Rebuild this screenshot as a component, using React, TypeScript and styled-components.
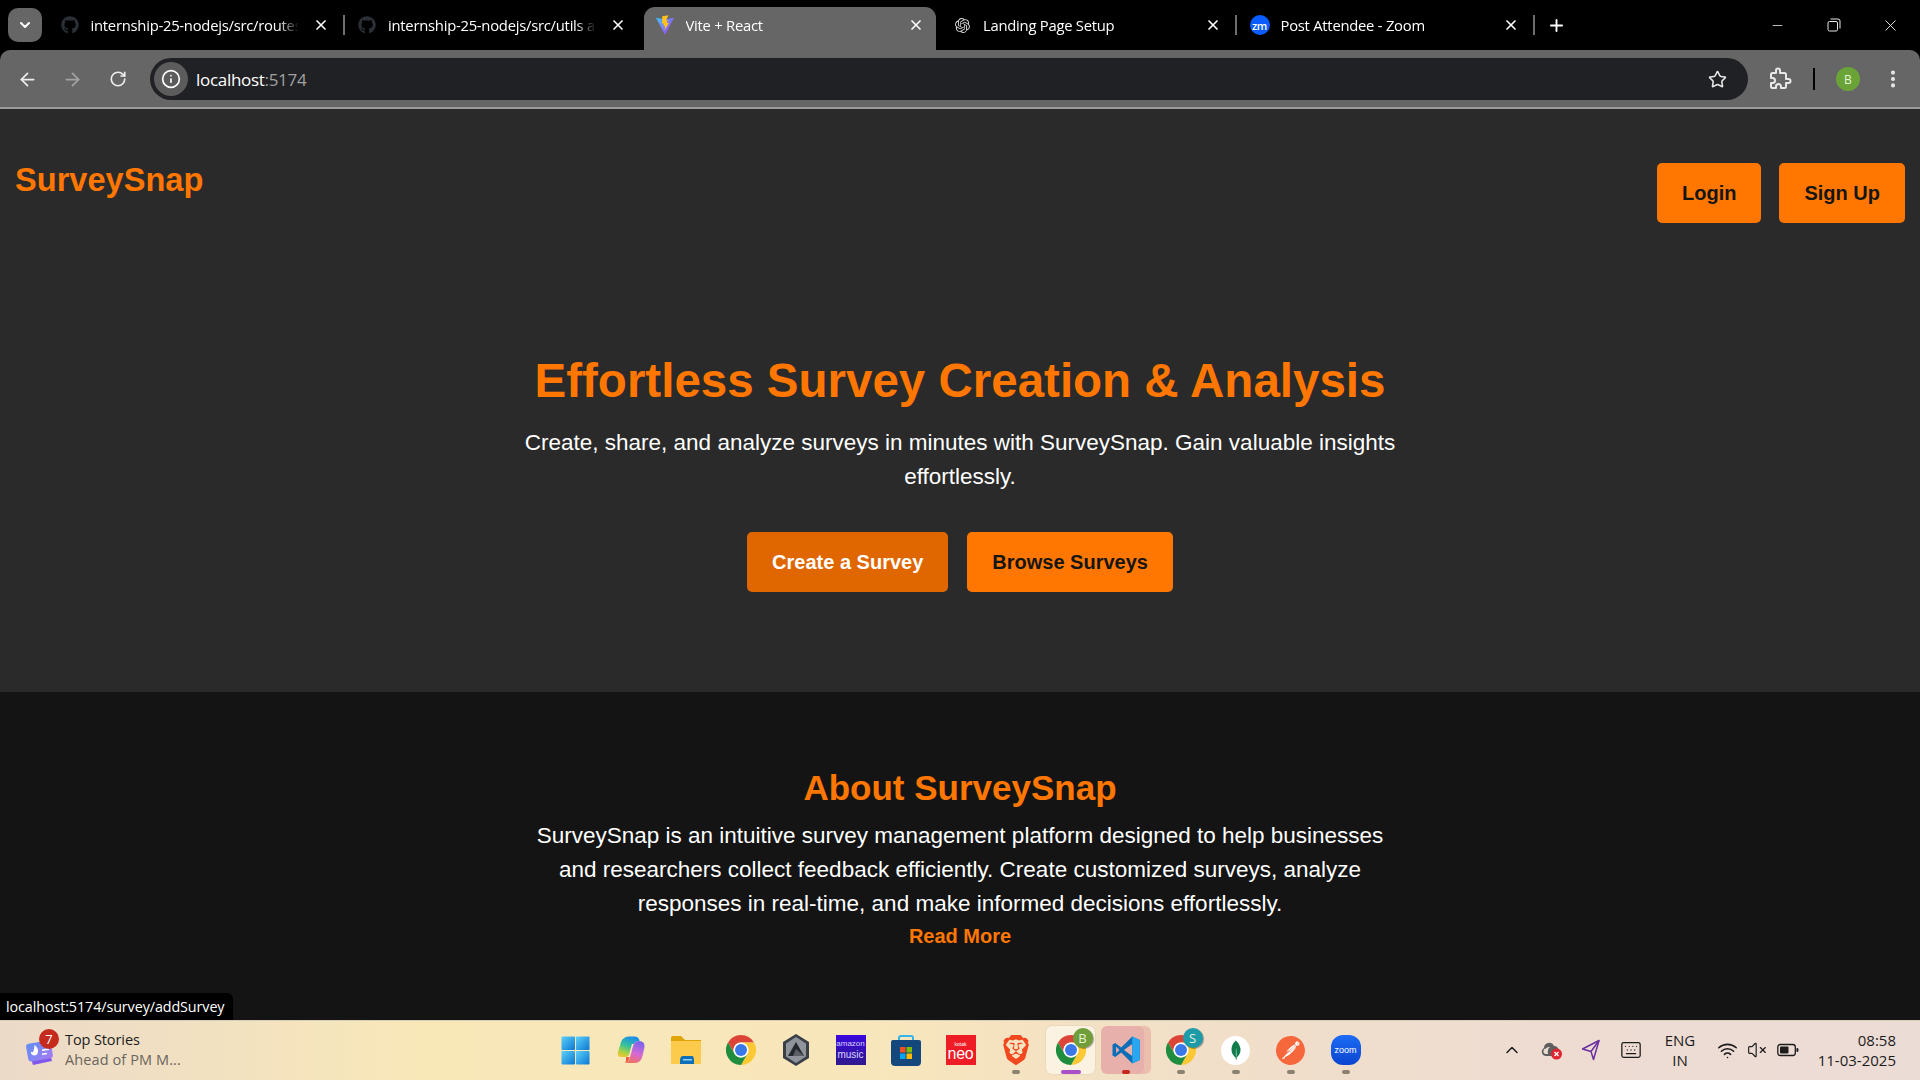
import React from "react";
import styled, { createGlobalStyle } from "styled-components";
import {
  ArrowLeft,
  ArrowRight,
  ChevronDown,
  ChevronUp,
  EllipsisVertical,
  Info,
  Keyboard,
  Minus,
  Plus,
  RotateCw,
  Star,
  VolumeX,
  Wifi,
  X,
} from "lucide-react";
import { FaGithub } from "react-icons/fa";
import { SiBrave, SiMongodb, SiOpenai, SiPostman } from "react-icons/si";

const ORANGE = "#ff7700";
const UI_FONT = `"Open Sans", "Noto Sans", sans-serif`;

const GlobalStyle = createGlobalStyle`
  html, body {
    margin: 0;
    padding: 0;
    background: #000;
    overflow: hidden;
  }
  * {
    box-sizing: border-box;
  }
`;

const Screen = styled.div`
  position: relative;
  display: flex;
  flex-direction: column;
  width: 1920px;
  height: 1080px;
  overflow: hidden;
  font-family: "Liberation Sans", Arial, sans-serif;
`;

/* browser chrome */

const TabStrip = styled.div`
  display: flex;
  align-items: center;
  height: 50px;
  flex-shrink: 0;
  padding-left: 8px;
  background: #000;
  color: #fff;
  font-family: ${UI_FONT};
`;

const TabSearch = styled.div`
  display: flex;
  align-items: center;
  justify-content: center;
  width: 34px;
  height: 34px;
  margin-right: 6px;
  border-radius: 10px;
  background: #666;
`;

const Tab = styled.div<{ $active?: boolean; $divider?: boolean }>`
  position: relative;
  display: flex;
  align-items: center;
  width: 297.5px;
  height: 50px;
  padding: 0 17px 0 12.5px;
  flex-shrink: 0;

  & > * {
    position: relative;
  }

  &::before {
    content: "";
    position: absolute;
    display: ${({ $active }) => ($active ? "block" : "none")};
    left: 1px;
    right: 5px;
    top: 7px;
    bottom: 0;
    background: #666;
    border-radius: 11px 11px 0 0;
  }

  &::after {
    content: "";
    position: absolute;
    display: ${({ $divider }) => ($divider ? "block" : "none")};
    right: 1px;
    top: 15px;
    height: 20px;
    width: 2px;
    background: #6e6e6e;
  }
`;

const Favicon = styled.div`
  display: flex;
  align-items: center;
  justify-content: center;
  width: 18px;
  height: 20px;
  margin-right: 12px;
  flex-shrink: 0;
`;

const ZoomFavicon = styled.div`
  display: flex;
  align-items: center;
  justify-content: center;
  flex-shrink: 0;
  width: 20px;
  height: 20px;
  border-radius: 50%;
  background: #0b5cff;
  color: #fff;
  font-size: 11px;
  font-weight: 600;
  letter-spacing: -0.5px;
`;

const TabTitle = styled.div`
  flex: 1;
  margin-right: 14px;
  overflow: hidden;
  white-space: nowrap;
  font-size: 14.8px;
  letter-spacing: -0.25px;
  mask-image: linear-gradient(to right, #000 90%, transparent 100%);
`;

const NewTab = styled.div`
  display: flex;
  margin-left: 11px;
`;

const WindowControls = styled.div`
  display: flex;
  margin-left: auto;
  margin-right: 1px;
`;

const WindowButton = styled.div`
  display: flex;
  align-items: center;
  justify-content: center;
  width: 56.5px;
  height: 50px;
`;

const Toolbar = styled.div`
  display: flex;
  align-items: center;
  height: 59px;
  flex-shrink: 0;
  padding: 1px 15px 0 5px;
  background: #666;
  border-bottom: 2px solid #9c9c9c;
  border-radius: 10px 10px 0 0;
  color: #e8e8e8;
  font-family: ${UI_FONT};
`;

const NavButton = styled.div<{ $dim?: boolean }>`
  display: flex;
  align-items: center;
  justify-content: center;
  width: 45px;
  height: 40px;
  color: ${({ $dim }) => ($dim ? "#a2a2a2" : "#ededed")};
`;

const Omnibox = styled.div`
  display: flex;
  align-items: center;
  flex: 1;
  height: 42px;
  margin-left: 10px;
  padding: 0 21px 0 4px;
  border-radius: 21px;
  background: #202124;
`;

const SiteInfo = styled.div`
  display: flex;
  align-items: center;
  justify-content: center;
  width: 34px;
  height: 34px;
  margin-right: 8px;
  border-radius: 50%;
  background: #5c5c5c;
  color: #fff;
`;

const UrlHost = styled.span`
  color: #fff;
  font-size: 17px;
  letter-spacing: -0.3px;
`;

const UrlPort = styled.span`
  color: #a0a0a0;
  font-size: 17px;
  letter-spacing: -0.3px;
`;

const OmniEnd = styled.div`
  display: flex;
  margin-left: auto;
`;

const Extensions = styled.div`
  display: flex;
  margin-left: 20px;
`;

const ToolbarDivider = styled.div`
  width: 2px;
  height: 22px;
  margin-left: 21px;
  background: #000;
`;

const Avatar = styled.div`
  display: flex;
  align-items: center;
  justify-content: center;
  width: 24px;
  height: 24px;
  margin-left: 21px;
  border-radius: 50%;
  background: #6aa338;
  color: #e4f3d4;
  font-size: 12px;
`;

const MenuButton = styled.div`
  display: flex;
  justify-content: center;
  width: 24px;
  margin-left: 21px;
`;

/* page */

const Page = styled.main`
  flex: 1;
  min-height: 0;
  overflow: hidden;
  background: #2a2a2a;
`;

const Navbar = styled.nav`
  display: flex;
  justify-content: space-between;
  align-items: flex-start;
  padding: 54px 15px 0;
`;

const Logo = styled.div`
  margin-top: 1px;
  color: ${ORANGE};
  font-size: 32.6px;
  font-weight: 700;
  line-height: 32px;
`;

const NavActions = styled.div`
  display: flex;
  gap: 18px;
`;

const Button = styled.button<{ $tone?: "dark" | "light" }>`
  height: 60px;
  padding: 0 25px;
  border: none;
  border-radius: 5px;
  background: ${({ $tone }) => ($tone === "dark" ? "#e06600" : ORANGE)};
  color: ${({ $tone }) => ($tone === "dark" ? "#fff" : "#151515")};
  font-family: inherit;
  font-size: 20px;
  font-weight: 700;
`;

const Hero = styled.section`
  display: flex;
  flex-direction: column;
  align-items: center;
  height: 469px;
  padding-top: 130px;
  text-align: center;
  background: #2a2a2a;
`;

const HeroTitle = styled.h1`
  margin: 0 0 17px;
  color: ${ORANGE};
  font-size: 47.5px;
  font-weight: 700;
  line-height: 56px;
`;

const Lead = styled.p`
  width: 880px;
  margin: 0;
  color: #fff;
  font-size: 22.5px;
  line-height: 34px;
`;

const HeroActions = styled.div`
  display: flex;
  gap: 19px;
  margin-top: 38px;
`;

const About = styled.section`
  display: flex;
  flex-direction: column;
  align-items: center;
  height: 328px;
  padding-top: 74px;
  text-align: center;
  background: #141414;
`;

const AboutTitle = styled.h2`
  margin: 0 0 9px;
  color: ${ORANGE};
  font-size: 35px;
  font-weight: 700;
  line-height: 44px;
`;

const ReadMore = styled.a`
  margin-top: 3px;
  color: ${ORANGE};
  font-size: 20px;
  font-weight: 700;
  line-height: 24px;
`;

const StatusBubble = styled.div`
  position: absolute;
  left: 0;
  bottom: 60px;
  height: 27px;
  padding: 0 9px 0 6px;
  background: #000;
  border-radius: 0 6px 0 0;
  color: #fff;
  font-family: ${UI_FONT};
  font-size: 14.35px;
  line-height: 27px;
  letter-spacing: -0.1px;
`;

/* taskbar */

const Taskbar = styled.footer`
  display: grid;
  grid-template-columns: 548px auto 1fr;
  align-items: center;
  height: 60px;
  flex-shrink: 0;
  box-shadow: inset 0 1px 0 #d8cdb8;
  background: linear-gradient(90deg, #ecdac9 0%, #f8e8b8 22%, #f8e6bb 45%, #f1dfc8 62%, #eedcd2 80%, #ecdcd6 100%);
  color: #1c1c1c;
  font-family: ${UI_FONT};
`;

const Widget = styled.div`
  display: flex;
  align-items: center;
  padding-left: 25px;
`;

const WidgetIcon = styled.div`
  position: relative;
  width: 40px;
  height: 42px;
`;

const WidgetBadge = styled.span`
  position: absolute;
  left: 14px;
  top: 0;
  width: 20px;
  height: 20px;
  border-radius: 50%;
  background: #c42b1c;
  color: #fff;
  font-size: 13px;
  line-height: 20px;
  text-align: center;
`;

const WidgetText = styled.div`
  margin-top: -1px;
  font-size: 14.5px;
  line-height: 20px;
  letter-spacing: -0.1px;
`;

const WidgetSub = styled.div`
  color: #6a655c;
  letter-spacing: 0.1px;
`;

const Apps = styled.div`
  display: flex;
`;

const AppSlot = styled.div<{ $state?: "focus" | "alert" }>`
  position: relative;
  display: flex;
  align-items: center;
  justify-content: center;
  width: 55px;
  height: 60px;

  &::before {
    content: "";
    position: absolute;
    display: ${({ $state }) => ($state ? "block" : "none")};
    left: 3px;
    right: ${({ $state }) => ($state === "alert" ? "9px" : "3px")};
    top: 6px;
    bottom: 6px;
    border-radius: 6px;
    background: ${({ $state }) => ($state === "focus" ? "#fbf2e2" : "#e8b0aa")};
    box-shadow: ${({ $state }) => ($state === "alert" ? "7px 0 0 0 #eabfae" : "0 0 2px rgba(0,0,0,.12)")};
  }

  & > * {
    position: relative;
  }
`;

const AppDot = styled.span<{ $color?: string; $wide?: boolean }>`
  && {
    position: absolute;
  }
  bottom: 6px;
  left: 50%;
  width: ${({ $wide }) => ($wide ? "20px" : "8px")};
  height: 4px;
  border-radius: 2px;
  transform: translateX(-50%);
  background: ${({ $color }) => $color || "#8c8070"};
`;

const IconBox = styled.div`
  position: relative;
  display: flex;
  align-items: center;
  justify-content: center;
  width: 30px;
  height: 30px;
`;

const AppBadge = styled.span<{ $bg: string }>`
  position: absolute;
  right: -7px;
  top: -7px;
  width: 20px;
  height: 20px;
  border-radius: 50%;
  background: ${({ $bg }) => $bg};
  color: #e6f1d6;
  font-size: 13px;
  line-height: 20px;
  text-align: center;
  box-shadow: 1px 1px 1px rgba(0, 0, 0, 0.35);
`;

const SquareApp = styled.div<{ $bg: string }>`
  display: flex;
  flex-direction: column;
  align-items: center;
  justify-content: center;
  width: 30px;
  height: 30px;
  background: ${({ $bg }) => $bg};
  color: #fff;
  font-family: "Liberation Sans", sans-serif;
  line-height: 1;
`;

const AmazonLine = styled.span<{ $size: number }>`
  font-size: ${({ $size }) => $size}px;
  color: #d8d2ff;
  margin: 1px 0;
`;

const KotakText = styled.span`
  font-size: 5px;
  line-height: 6px;
`;

const NeoText = styled.span`
  font-size: 16px;
  line-height: 13px;
  letter-spacing: -0.3px;
`;

const RoundApp = styled.div<{ $bg: string }>`
  display: flex;
  align-items: center;
  justify-content: center;
  width: 29px;
  height: 29px;
  border-radius: 50%;
  background: ${({ $bg }) => $bg};
`;

const ZoomApp = styled.div`
  display: flex;
  align-items: center;
  justify-content: center;
  width: 30px;
  height: 30px;
  border-radius: 12px;
  background: linear-gradient(180deg, #1c6cf5, #0b45d0);
  color: #fff;
  font-family: "Liberation Sans", sans-serif;
  font-size: 9px;
`;

const Tray = styled.div`
  display: flex;
  align-items: center;
  justify-content: flex-end;
  padding-right: 24px;
`;

const TrayItem = styled.div<{ $w: number }>`
  display: flex;
  align-items: center;
  justify-content: center;
  width: ${({ $w }) => $w}px;
`;

const Lang = styled.div`
  width: 48px;
  margin: 0 6px 0 4px;
  font-size: 15px;
  line-height: 20px;
  text-align: center;
`;

const Clock = styled.div`
  width: 80px;
  margin-left: 10px;
  font-size: 15px;
  line-height: 20px;
  text-align: right;
  white-space: nowrap;
`;

/* drawn icons */

const ViteIcon = () => (
  <svg width="20" height="22" viewBox="0 0 20 22">
    <defs>
      <linearGradient id="viteBody" x1="0" y1="0" x2="1" y2="0.8">
        <stop offset="0" stopColor="#41c8ff" />
        <stop offset="1" stopColor="#a93cf5" />
      </linearGradient>
    </defs>
    <path d="M0 3 L10 5 L20 3 L10.4 21.4 Q10 22 9.6 21.4 Z" fill="url(#viteBody)" />
    <path d="M14 0.2 L7 1.4 L6.6 9.6 L8.8 9.2 L8.2 12.4 L10.2 12 L9.4 17 L14.6 8.4 L12 8.8 L13 5.4 L11 5.8 Z" fill="#ffc21c" />
  </svg>
);

const RestoreIcon = () => (
  <svg width="14" height="14" viewBox="0 0 14 14" fill="none" stroke="#e8e8e8" strokeWidth="1">
    <rect x="1" y="3.5" width="9.5" height="9.5" rx="1.5" />
    <path d="M3.5 1 H11 Q13 1 13 3 V10.5" />
  </svg>
);

const ExtensionIcon = () => (
  <svg width="24" height="24" viewBox="0 0 24 24" fill="none" stroke="#e8e8e8" strokeWidth="2" strokeLinejoin="round">
    <path d="M20.5 12H18V7.5a1.5 1.5 0 0 0-1.5-1.5H12V3.5a2 2 0 0 0-4 0V6H4.5A1.5 1.5 0 0 0 3 7.5V11h1.5a2.5 2.5 0 0 1 0 5H3v3.5A1.5 1.5 0 0 0 4.5 21H8v-1.5a2.5 2.5 0 0 1 5 0V21h3.5a1.5 1.5 0 0 0 1.5-1.5V16h2.5a2 2 0 0 0 0-4z" />
  </svg>
);

const ChromeIcon = ({ size = 30 }: { size?: number }) => (
  <svg width={size} height={size} viewBox="0 0 48 48">
    <path d="M24 0A24 24 0 0 1 44.8 12H24A12 12 0 0 0 13.6 30L3.2 12A24 24 0 0 1 24 0Z" fill="#db4437" />
    <path d="M44.8 12A24 24 0 0 1 24 48L34.4 30A12 12 0 0 0 24 12Z" fill="#fcc934" />
    <path d="M3.2 12A24 24 0 0 0 24 48L34.4 30A12 12 0 0 1 13.6 30Z" fill="#1e8e3e" />
    <circle cx="24" cy="24" r="12" fill="#fff" />
    <circle cx="24" cy="24" r="9.6" fill="#3b78e7" />
  </svg>
);

const WindowsIcon = () => (
  <svg width="29" height="29" viewBox="0 0 30 30">
    <defs>
      <linearGradient id="winTile" x1="0" y1="0" x2="1" y2="1">
        <stop offset="0" stopColor="#5ed0f7" />
        <stop offset="1" stopColor="#0a78d6" />
      </linearGradient>
    </defs>
    <rect x="0.5" y="0.5" width="14" height="14" rx="1" fill="url(#winTile)" />
    <rect x="15.5" y="0.5" width="14" height="14" rx="1" fill="url(#winTile)" />
    <rect x="0.5" y="15.5" width="14" height="14" rx="1" fill="url(#winTile)" />
    <rect x="15.5" y="15.5" width="14" height="14" rx="1" fill="url(#winTile)" />
  </svg>
);

const CopilotIcon = () => (
  <svg width="28" height="28" viewBox="0 0 28 28">
    <defs>
      <linearGradient id="copLeft" x1="0.6" y1="0" x2="0.2" y2="1">
        <stop offset="0" stopColor="#1b8ee8" />
        <stop offset="0.45" stopColor="#35c29a" />
        <stop offset="0.8" stopColor="#b4d23c" />
        <stop offset="1" stopColor="#f2c535" />
      </linearGradient>
      <linearGradient id="copRight" x1="0.6" y1="0" x2="0.3" y2="1">
        <stop offset="0" stopColor="#7a63ee" />
        <stop offset="0.55" stopColor="#d76ad4" />
        <stop offset="1" stopColor="#f0725c" />
      </linearGradient>
    </defs>
    <path d="M8 1.5 Q9 0.5 12 0.5 H18 Q21 0.5 22 3 L22.5 5 Q18 5 17 8 H15 Q14 11 13 15 L12 19 Q11 21 8 21 H4 Q0 21 1 16 L4 6 Q5 2.5 8 1.5 Z" fill="url(#copLeft)" />
    <path d="M17 8 Q18.5 5 22 5 Q28 5 27.5 11 L25.5 20 Q24 27 18 27 H8 Q11.5 26.5 12.5 23 L15.5 12 Q16 9.5 17 8 Z" fill="url(#copRight)" />
    <path d="M9 21 H12.5 L12 23.5 Q11 26.5 8 27 Q9.5 25 9 21 Z" fill="#ee5a3c" />
  </svg>
);

const FolderIcon = () => (
  <svg width="30" height="28" viewBox="0 0 30 28">
    <path d="M0 2 Q0 0 2 0 H10 L14 4 H30 V14 H0 Z" fill="#e0a408" />
    <path d="M0 5 H30 V27 Q30 28 29 28 H1 Q0 28 0 27 Z" fill="#fdcb4b" />
    <path d="M9 25 Q9 20 12 20 H21 Q23 20 23 25 V28 H9 Z" fill="#0c6fb8" />
    <rect x="12" y="23" width="9" height="1.5" fill="#8fd0f5" />
  </svg>
);

const HexIcon = () => (
  <svg width="30" height="32" viewBox="0 0 30 32">
    <path d="M15 0 L28 8 V24 L15 32 L2 24 V8 Z" fill="#3b3f46" />
    <path d="M15 3 L25 9.5 V22.5 L15 29 L5 22.5 V9.5 Z" fill="#8f949c" />
    <path d="M15 8 L23 22 H7 Z" fill="#26282d" />
    <path d="M15 15 L23 22 H12 Z" fill="#5b5f66" />
  </svg>
);

const StoreIcon = () => (
  <svg width="30" height="31" viewBox="0 0 30 31">
    <path d="M8 6 V3 Q8 1 10 1 H20 Q22 1 22 3 V6" fill="none" stroke="#34b6ea" strokeWidth="2" />
    <path d="M0 7 Q0 5 2 5 H28 Q30 5 30 7 V27 Q30 31 26 31 H4 Q0 31 0 27 Z" fill="#14487c" />
    <rect x="9" y="12" width="5.5" height="5.5" fill="#f25022" />
    <rect x="15.5" y="12" width="5.5" height="5.5" fill="#7fba00" />
    <rect x="9" y="18.5" width="5.5" height="5.5" fill="#00a4ef" />
    <rect x="15.5" y="18.5" width="5.5" height="5.5" fill="#ffb900" />
  </svg>
);

const VsCodeIcon = () => (
  <svg width="30" height="30" viewBox="0 0 100 100">
    <path fillRule="evenodd" d="M71 5 L34 42 L14 27 L5 32 V68 L14 73 L34 58 L71 95 L96 83 V17 Z M71 30 L43 50 L71 70 Z M17 39 L28 50 L17 61 Z" fill="#0a6fb8" />
    <path d="M71 5 L96 17 V83 L71 95 Z" fill="#2aa7f0" />
  </svg>
);

const NewsIcon = () => (
  <svg width="30" height="38" viewBox="0 0 30 38">
    <defs>
      <linearGradient id="newsTop" x1="0" y1="0" x2="1" y2="1">
        <stop offset="0" stopColor="#5f8ff5" />
        <stop offset="1" stopColor="#a77bf2" />
      </linearGradient>
    </defs>
    <path d="M5 26 L24 22 L27 32 L8 36 Z" fill="#8057ea" />
    <rect x="2" y="13" width="25" height="18" rx="3" fill="url(#newsTop)" transform="rotate(-10 14 22)" />
    <path d="M9.5 16 Q13.5 19 13 23 Q12.5 26.5 9 26.5 Q5.5 26 6 22.5 Q7 23.5 8 23 Q9.5 20 9.5 16 Z" fill="#fff" />
    <rect x="17" y="20" width="7" height="1.6" fill="#fff" transform="rotate(-10 20 21)" />
    <rect x="17" y="24" width="5" height="1.6" fill="#fff" transform="rotate(-10 20 25)" />
  </svg>
);

const CloudErrorIcon = () => (
  <svg width="22" height="20" viewBox="0 0 22 20">
    <path d="M5 16 H13 A5 5 0 0 0 13 6 Q11 2 7 3 Q3 4 3 8 Q0 10 1 13 Q2 16 5 16 Z" fill="#5e5e5e" />
    <path d="M4.5 14 Q2 13 2.5 10.5 Q3 8.5 5 8.5 Q6 6.5 9 7 Q6 9 7 14 Z" fill="#ecdcd2" />
    <circle cx="15.5" cy="14" r="5.5" fill="#e0232e" />
    <path d="M13.5 12 L17.5 16 M17.5 12 L13.5 16" stroke="#fff" strokeWidth="1.4" />
  </svg>
);

const SendIcon = () => (
  <svg width="20" height="22" viewBox="0 0 20 22" fill="none" stroke="#6b2fa0" strokeWidth="1.5" strokeLinejoin="round">
    <path d="M18 1.5 L1.5 10 L10 12.5 L12.5 20.5 Z" />
    <path d="M10 12.5 L18 1.5" />
  </svg>
);

const BatteryIcon = () => (
  <svg width="22" height="14" viewBox="0 0 22 14" fill="none">
    <rect x="0.8" y="1.5" width="17.5" height="11" rx="2.5" stroke="#1c1c1c" strokeWidth="1.3" />
    <rect x="3" y="3.6" width="8.5" height="6.8" rx="1" fill="#1c1c1c" />
    <rect x="19.4" y="5" width="2" height="4" rx="1" fill="#1c1c1c" />
  </svg>
);

const tabs = [
  { title: "internship-25-nodejs/src/routes at main", icon: <FaGithub size={18} color="#2a3036" />, divider: true },
  { title: "internship-25-nodejs/src/utils at main", icon: <FaGithub size={18} color="#2a3036" /> },
  { title: "Vite + React", icon: <ViteIcon />, active: true },
  { title: "Landing Page Setup", icon: <SiOpenai size={15} color="#d8d8d8" />, divider: true },
  { title: "Post Attendee - Zoom", icon: <ZoomFavicon>zm</ZoomFavicon>, divider: true },
];

const App = () => {
  return (
    <Screen>
      <GlobalStyle />
      <TabStrip>
        <TabSearch>
          <ChevronDown size={16} strokeWidth={3} color="#fff" />
        </TabSearch>
        {tabs.map((tab) => (
          <Tab key={tab.title} $active={tab.active} $divider={tab.divider}>
            <Favicon>{tab.icon}</Favicon>
            <TabTitle>{tab.title}</TabTitle>
            <X size={16} strokeWidth={2.5} color="#fff" />
          </Tab>
        ))}
        <NewTab>
          <Plus size={19} strokeWidth={2.4} color="#fff" />
        </NewTab>
        <WindowControls>
          <WindowButton>
            <Minus size={15} strokeWidth={1.3} color="#e8e8e8" />
          </WindowButton>
          <WindowButton>
            <RestoreIcon />
          </WindowButton>
          <WindowButton>
            <X size={19} strokeWidth={1.2} color="#e8e8e8" />
          </WindowButton>
        </WindowControls>
      </TabStrip>

      <Toolbar>
        <NavButton>
          <ArrowLeft size={21} strokeWidth={2} />
        </NavButton>
        <NavButton $dim>
          <ArrowRight size={21} strokeWidth={2} />
        </NavButton>
        <NavButton>
          <RotateCw size={18} strokeWidth={2.2} />
        </NavButton>
        <Omnibox>
          <SiteInfo>
            <Info size={20} strokeWidth={2} />
          </SiteInfo>
          <UrlHost>localhost</UrlHost>
          <UrlPort>:5174</UrlPort>
          <OmniEnd>
            <Star size={19} strokeWidth={2} color="#e8e8e8" />
          </OmniEnd>
        </Omnibox>
        <Extensions>
          <ExtensionIcon />
        </Extensions>
        <ToolbarDivider />
        <Avatar>B</Avatar>
        <MenuButton>
          <EllipsisVertical size={22} strokeWidth={2.5} />
        </MenuButton>
      </Toolbar>

      <Page>
        <Navbar>
          <Logo>SurveySnap</Logo>
          <NavActions>
            <Button>Login</Button>
            <Button>Sign Up</Button>
          </NavActions>
        </Navbar>
        <Hero>
          <HeroTitle>Effortless Survey Creation &amp; Analysis</HeroTitle>
          <Lead>Create, share, and analyze surveys in minutes with SurveySnap. Gain valuable insights effortlessly.</Lead>
          <HeroActions>
            <Button $tone="dark">Create a Survey</Button>
            <Button>Browse Surveys</Button>
          </HeroActions>
        </Hero>
        <About>
          <AboutTitle>About SurveySnap</AboutTitle>
          <Lead>
            SurveySnap is an intuitive survey management platform designed to help businesses and researchers collect
            feedback efficiently. Create customized surveys, analyze responses in real-time, and make informed decisions
            effortlessly.
          </Lead>
          <ReadMore>Read More</ReadMore>
        </About>
      </Page>

      <StatusBubble>localhost:5174/survey/addSurvey</StatusBubble>

      <Taskbar>
        <Widget>
          <WidgetIcon>
            <NewsIcon />
            <WidgetBadge>7</WidgetBadge>
          </WidgetIcon>
          <WidgetText>
            <div>Top Stories</div>
            <WidgetSub>Ahead of PM M...</WidgetSub>
          </WidgetText>
        </Widget>

        <Apps>
          <AppSlot><WindowsIcon /></AppSlot>
          <AppSlot><CopilotIcon /></AppSlot>
          <AppSlot><FolderIcon /></AppSlot>
          <AppSlot><ChromeIcon /></AppSlot>
          <AppSlot><HexIcon /></AppSlot>
          <AppSlot>
            <SquareApp $bg="linear-gradient(180deg, #3a06e0, #2f1a8c)">
              <AmazonLine $size={8}>amazon</AmazonLine>
              <AmazonLine $size={10}>music</AmazonLine>
            </SquareApp>
          </AppSlot>
          <AppSlot><StoreIcon /></AppSlot>
          <AppSlot>
            <SquareApp $bg="#ee1c25">
              <KotakText>kotak</KotakText>
              <NeoText>neo</NeoText>
            </SquareApp>
          </AppSlot>
          <AppSlot>
            <SiBrave size={30} color="#f1481f" />
            <AppDot />
          </AppSlot>
          <AppSlot $state="focus">
            <IconBox>
              <ChromeIcon />
              <AppBadge $bg="#6f9e3a">B</AppBadge>
            </IconBox>
            <AppDot $color="#a94fc8" $wide />
          </AppSlot>
          <AppSlot $state="alert">
            <VsCodeIcon />
            <AppDot $color="#c4281c" />
          </AppSlot>
          <AppSlot>
            <IconBox>
              <ChromeIcon />
              <AppBadge $bg="#1e9ba8">S</AppBadge>
            </IconBox>
            <AppDot />
          </AppSlot>
          <AppSlot>
            <RoundApp $bg="#fff">
              <SiMongodb size={20} color="#0f7a4a" />
            </RoundApp>
            <AppDot />
          </AppSlot>
          <AppSlot>
            <RoundApp $bg="#fff">
              <SiPostman size={29} color="#f6673b" />
            </RoundApp>
            <AppDot />
          </AppSlot>
          <AppSlot>
            <ZoomApp>zoom</ZoomApp>
            <AppDot />
          </AppSlot>
        </Apps>

        <Tray>
          <TrayItem $w={40}><ChevronUp size={20} strokeWidth={1.8} /></TrayItem>
          <TrayItem $w={40}><CloudErrorIcon /></TrayItem>
          <TrayItem $w={38}><SendIcon /></TrayItem>
          <TrayItem $w={42}><Keyboard size={22} strokeWidth={1.4} /></TrayItem>
          <Lang>
            ENG
            <br />
            IN
          </Lang>
          <TrayItem $w={34}><Wifi size={21} strokeWidth={1.8} /></TrayItem>
          <TrayItem $w={26}><VolumeX size={20} strokeWidth={1.4} /></TrayItem>
          <TrayItem $w={36}><BatteryIcon /></TrayItem>
          <Clock>
            08:58
            <br />
            11-03-2025
          </Clock>
        </Tray>
      </Taskbar>
    </Screen>
  );
};

export default App;
